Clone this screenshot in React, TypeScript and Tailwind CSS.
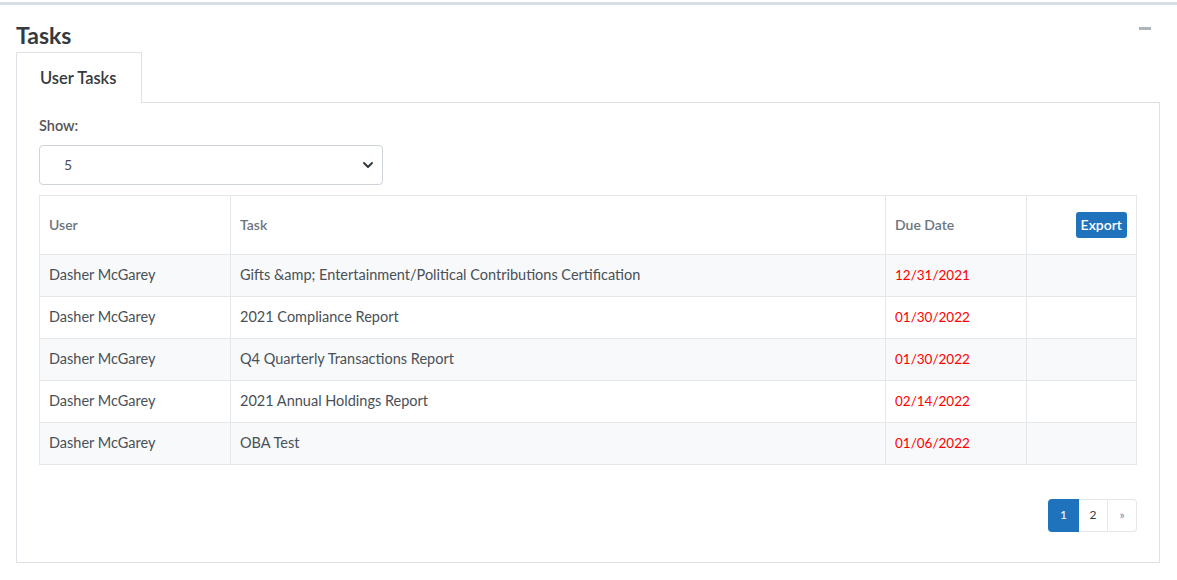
import { ChevronDown } from "lucide-react";

type Row = { user: string; task: string; due: string };

const rows: Row[] = [
  { user: "Dasher McGarey", task: "Gifts &amp; Entertainment/Political Contributions Certification", due: "12/31/2021" },
  { user: "Dasher McGarey", task: "2021 Compliance Report", due: "01/30/2022" },
  { user: "Dasher McGarey", task: "Q4 Quarterly Transactions Report", due: "01/30/2022" },
  { user: "Dasher McGarey", task: "2021 Annual Holdings Report", due: "02/14/2022" },
  { user: "Dasher McGarey", task: "OBA Test", due: "01/06/2022" },
];

export default function App() {
  return (
    <div
      className="w-[1177px] h-[580px] bg-white pt-[2px] text-[#495057]"
      style={{ fontFamily: "Lato, 'Noto Sans', sans-serif" }}
    >
      <div className="border-t-[3px] border-[#d7dee4] h-[575px]">
        {/* Header */}
        <div className="flex items-start justify-between px-4 pt-[15px]">
          <h1 className="text-[23px] leading-[30px] font-bold text-[#343a40]">Tasks</h1>
          <div className="mt-[7px] mr-[10px] w-3 h-[3px] bg-[#adb5bd]" />
        </div>

        {/* Tabs */}
        <div className="px-4 mt-[2px]">
          <div className="flex">
            <div className="w-[126px] h-[51px] border border-b-0 border-[#dee2e6] flex items-center pl-[23px] text-[16.5px] font-semibold text-[#343a40] bg-white relative z-10 -mb-px">
              User Tasks
            </div>
          </div>
          <div className="w-[1144px] h-[461px] border border-[#dee2e6] px-[22px] pt-[12px]">
            <div className="text-[14.5px] font-semibold text-[#555]">Show:</div>
            <div className="mt-[8px] w-[344px] h-10 border border-[#ced4da] rounded flex items-center justify-between pl-6 pr-[6px] text-[14px] text-[#495057]">
              <span>5</span>
              <ChevronDown className="w-4 h-4 text-[#343a40]" strokeWidth={3} />
            </div>

            <table className="mt-[10px] w-[1098px] border-collapse text-[14.5px] leading-5">
              <thead>
                <tr className="h-[59px]">
                  <th className="w-[191px] border border-[#e5e8eb] text-left font-semibold text-[#6c757d] pl-[9px] text-[14px]">User</th>
                  <th className="w-[655px] border border-[#e5e8eb] text-left font-semibold text-[#6c757d] pl-[9px] text-[14px]">Task</th>
                  <th className="w-[141px] border border-[#e5e8eb] text-left font-semibold text-[#6c757d] pl-[9px] text-[14px]">Due Date</th>
                  <th className="border border-[#e5e8eb] text-right pr-[9px] align-top pt-[16px]">
                    <button className="h-[26px] px-[5px] rounded-[3px] bg-[#1f73bc] text-white text-[14px] font-semibold">
                      Export
                    </button>
                  </th>
                </tr>
              </thead>
              <tbody>
                {rows.map((r, i) => (
                  <tr key={i} className={`h-[42px] ${i % 2 === 0 ? "bg-[#f8f9fa]" : "bg-white"}`}>
                    <td className="border border-[#e5e8eb] pl-[9px]">{r.user}</td>
                    <td className="border border-[#e5e8eb] pl-[9px]">{r.task}</td>
                    <td className="border border-[#e5e8eb] pl-[9px] text-[13.5px] text-[#ff0000]">{r.due}</td>
                    <td className="border border-[#e5e8eb]" />
                  </tr>
                ))}
              </tbody>
            </table>

            {/* Pagination */}
            <div className="mt-[34px] flex justify-end w-[1098px]">
              <div className="flex h-[33px] text-[12px]">
                <div className="w-[31px] flex items-center justify-center bg-[#1f73bc] text-white rounded-l">1</div>
                <div className="w-[29px] flex items-center justify-center border border-l-0 border-[#e5e8eb] text-[#343a40]">2</div>
                <div className="w-[29px] flex items-center justify-center border border-l-0 border-[#e5e8eb] rounded-r text-[#6c8ebf]">»</div>
              </div>
            </div>
          </div>
        </div>
      </div>
    </div>
  );
}
